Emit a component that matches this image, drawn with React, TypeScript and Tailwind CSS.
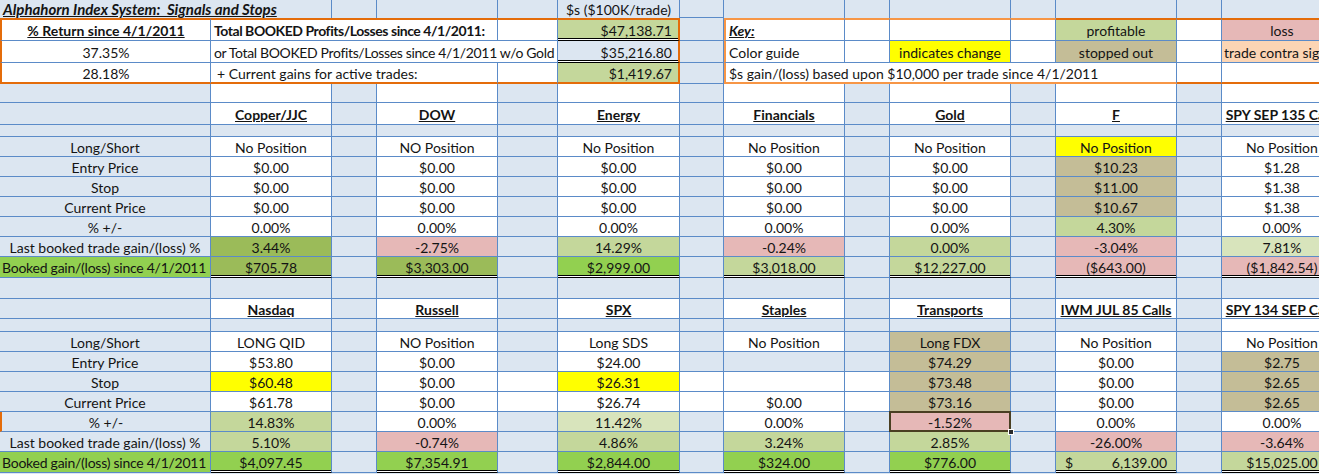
import React, { Fragment } from 'react';

type Bg = 'W' | 'B' | 'G0' | 'G1' | 'G2' | 'G3' | 'P' | 'T' | 'Y' | 'O';
type Val = [string, Bg?, ('sel' | 'acct')?];
interface Inst { name: string; v: Val[]; }

const bgs: Record<Bg, string> = {
  W: 'bg-white',
  B: 'bg-[#dce6f1]',
  G0: 'bg-[#d8e4bc]',
  G1: 'bg-[#c4d79b]',
  G2: 'bg-[#9bbb59]',
  G3: 'bg-[#92d050]',
  P: 'bg-[#e6b8b7]',
  T: 'bg-[#c4bd97]',
  Y: 'bg-[#ffff00]',
  O: 'bg-[#fcd5b4]',
};

// column widths (wide value columns and the narrow spacer columns between them)
const wideW = ['w-[121px]', 'w-[121px]', 'w-[122px]', 'w-[121px]', 'w-[121px]', 'w-[121px]', 'w-[121px]'];
const gapW = ['w-[45px]', 'w-[60px]', 'w-[44px]', 'w-[45px]', 'w-[45px]', 'w-[45px]'];

const labels = [
  'Long/Short',
  'Entry Price',
  'Stop',
  'Current Price',
  '% +/-',
  'Last booked trade gain/(loss) %',
  'Booked gain/(loss) since 4/1/2011',
];

const zero: Val[] = [['$0.00'], ['$0.00'], ['$0.00'], ['0.00%']];

const upper: Inst[] = [
  { name: 'Copper/JJC', v: [['No Position'], ...zero, ['3.44%', 'G2'], ['$705.78', 'G2']] },
  { name: 'DOW', v: [['NO Position'], ...zero, ['-2.75%', 'P'], ['$3,303.00', 'G2']] },
  { name: 'Energy', v: [['No Position'], ...zero, ['14.29%', 'G1'], ['$2,999.00', 'G3']] },
  { name: 'Financials', v: [['No Position'], ...zero, ['-0.24%', 'P'], ['$3,018.00', 'G1']] },
  { name: 'Gold', v: [['No Position'], ...zero, ['0.00%', 'G1'], ['$12,227.00', 'G1']] },
  { name: 'F', v: [['No Position', 'Y'], ['$10.23', 'T'], ['$11.00', 'T'], ['$10.67', 'T'], ['4.30%', 'G1'], ['-3.04%', 'P'], ['($643.00)', 'P']] },
  { name: 'SPY SEP 135 Calls', v: [['No Position'], ['$1.28'], ['$1.38'], ['$1.38'], ['0.00%'], ['7.81%', 'G0'], ['($1,842.54)', 'P']] },
];

const lower: Inst[] = [
  { name: 'Nasdaq', v: [['LONG QID'], ['$53.80'], ['$60.48', 'Y'], ['$61.78'], ['14.83%', 'G1'], ['5.10%', 'G1'], ['$4,097.45', 'G3']] },
  { name: 'Russell', v: [['NO Position'], ...zero, ['-0.74%', 'P'], ['$7,354.91', 'G3']] },
  { name: 'SPX', v: [['Long SDS'], ['$24.00'], ['$26.31', 'Y'], ['$26.74'], ['11.42%', 'G0'], ['4.86%', 'G1'], ['$2,844.00', 'G3']] },
  { name: 'Staples', v: [['No Position'], ['', 'B'], [''], ['$0.00'], ['0.00%'], ['3.24%', 'G1'], ['$324.00', 'G3']] },
  { name: 'Transports', v: [['Long FDX', 'T'], ['$74.29', 'T'], ['$73.48', 'T'], ['$73.16', 'T'], ['-1.52%', 'P', 'sel'], ['2.85%', 'G1'], ['$776.00', 'G3']] },
  { name: 'IWM JUL 85 Calls', v: [['No Position'], ...zero, ['-26.00%', 'P'], ['6,139.00', 'G1', 'acct']] },
  { name: 'SPY 134 SEP Calls', v: [['No Position'], ['$2.75', 'T'], ['$2.65', 'T'], ['$2.65', 'T'], ['0.00%'], ['-3.64%', 'P'], ['$15,025.00', 'G1']] },
];

const DOUBLE = 'border-b-black shadow-[inset_0_-1px_0_#ffffff,inset_0_-2px_0_#000000]';
const OB = 'border-b-2 border-b-[#e46c0a]';

interface CellProps {
  w: string;
  bg?: string;
  bb?: string;
  br?: string;
  justify?: string;
  className?: string;
  children?: React.ReactNode;
}

const Cell = ({
  w,
  bg = 'bg-[#dce6f1]',
  bb = 'border-b',
  br = 'border-r',
  justify = 'justify-center',
  className = '',
  children,
}: CellProps) => (
  <div className={`${w} ${bg} ${bb} ${br} ${justify} border-[#5b8bc8] shrink-0 flex items-center pt-[1px] whitespace-nowrap ${className}`}>
    {children}
  </div>
);

const Block = ({ items, second }: { items: Inst[]; second?: boolean }) => (
  <>
    <div className={`flex ${second ? 'h-[20px]' : 'h-[22px]'}`}>
      <Cell w="w-[211px]" />
      {items.map((it, i) => (
        <Fragment key={it.name}>
          <Cell w={wideW[i]} bg="bg-white" className="font-bold underline">{it.name}</Cell>
          {i < 6 && <Cell w={gapW[i]} />}
        </Fragment>
      ))}
    </div>
    <div className={`flex ${second ? 'h-[13px]' : 'h-[12px]'}`}>
      <Cell w="w-[211px]" />
      {items.map((it, i) => (
        <Fragment key={it.name}>
          <Cell w={wideW[i]} bg={second && i === 6 ? 'bg-white' : 'bg-[#dce6f1]'} />
          {i < 6 && <Cell w={gapW[i]} />}
        </Fragment>
      ))}
    </div>
    {labels.map((label, r) => {
      const last = r === 6;
      const whiteGap = second && (r === 2 || r === 3);
      return (
        <div key={label} className={`flex ${last ? 'h-[21px]' : 'h-[20px]'}`}>
          <Cell
            w="w-[211px]"
            bg={last ? 'bg-[#92d050]' : 'bg-[#dce6f1]'}
            justify={last ? 'justify-start pl-[2px]' : 'justify-center'}
            className={`${second && r === 4 ? 'border-l-2 border-l-[#e46c0a]' : ''} ${last ? 'tracking-[-0.25px]' : ''}`}
          >
            {label}
          </Cell>
          {items.map((it, i) => {
            const [text, bg = 'W', kind] = it.v[r];
            return (
              <Fragment key={it.name}>
                <Cell
                  w={wideW[i]}
                  bg={bgs[bg]}
                  justify={kind === 'acct' ? 'justify-between px-[9px]' : 'justify-center'}
                  className={`${last ? DOUBLE : ''} ${kind ? 'relative' : ''}`}
                >
                  {kind === 'acct' && <span>$</span>}
                  {text}
                  {kind === 'sel' && (
                    <>
                      <div className="absolute -inset-[1px] z-10 border-2 border-[#4a3f22]" />
                      <div className="absolute -right-[4px] -bottom-[4px] z-20 w-[6px] h-[6px] bg-[#2b2b2b] border border-white" />
                    </>
                  )}
                </Cell>
                {i < 6 && <Cell w={gapW[i]} bg={whiteGap && i >= 1 && i <= 3 ? 'bg-white' : 'bg-[#dce6f1]'} />}
              </Fragment>
            );
          })}
        </div>
      );
    })}
  </>
);

const BlankRow = ({ h, wideWhite }: { h: string; wideWhite?: boolean }) => (
  <div className={`flex ${h}`}>
    <Cell w="w-[211px]" />
    {wideW.map((w, i) => (
      <Fragment key={i}>
        <Cell w={w} bg={wideWhite ? 'bg-white' : 'bg-[#dce6f1]'} />
        {i < 6 && <Cell w={gapW[i]} />}
      </Fragment>
    ))}
  </div>
);

export default function App() {
  const top2 = 'border-t-2 border-t-[#e46c0a]';
  const keyTop = 'border-t-2 border-t-[#f79646]';
  return (
    <div className="w-[1319px] h-[474px] overflow-hidden bg-[#dce6f1] font-['Lato',sans-serif] text-[14px] text-[#141414]">
      <div className="w-[1343px]">
        {/* title row */}
        <div className="flex h-[18px]">
          <Cell w="w-[332px]" bb="" justify="justify-start pl-[3px]" className="text-[15px] font-bold italic underline whitespace-pre">
            Alphahorn Index System:  Signals and Stops
          </Cell>
          <Cell w="w-[45px]" bb="" />
          <Cell w="w-[121px]" bb="" />
          <Cell w="w-[60px]" bb="" />
          <Cell w="w-[122px]" bb="">$s ($100K/trade)</Cell>
          <Cell w="w-[44px]" />
          <Cell w="w-[121px]" bb="" />
          <Cell w="w-[45px]" bb="" />
          <Cell w="w-[121px]" bb="" />
          <Cell w="w-[45px]" bb="" />
          <Cell w="w-[121px]" bb="" />
          <Cell w="w-[45px]" bb="" />
          <Cell w="w-[121px]" bb="" />
        </div>

        {/* summary box + key */}
        <div className="flex h-[23px]">
          <Cell w="w-[211px]" bg="bg-white" className={`${top2} border-l-2 border-l-[#e46c0a] font-bold underline`}>
            % Return since 4/1/2011
          </Cell>
          <Cell w="w-[287px]" bg="bg-white" justify="justify-start pl-[3px]" className={`${top2} font-bold tracking-[-0.45px]`}>
            Total BOOKED Profits/Losses since 4/1/2011:
          </Cell>
          <Cell w="w-[60px]" bg="bg-white" className={top2} />
          <Cell w="w-[122px]" bg="bg-[#c4d79b]" br="border-r-2 border-r-[#e46c0a]" justify="justify-end pr-[6px]" className={`${top2} ${DOUBLE}`}>
            $47,138.71
          </Cell>
          <Cell w="w-[44px]" />
          <Cell w="w-[121px]" bg="bg-white" justify="justify-start pl-[3px]" className={`${keyTop} border-l-2 border-l-[#f79646] font-bold italic underline`}>
            Key:
          </Cell>
          <Cell w="w-[45px]" bg="bg-white" className={keyTop} />
          <Cell w="w-[121px]" bg="bg-white" className={keyTop} />
          <Cell w="w-[45px]" bg="bg-white" className={keyTop} />
          <Cell w="w-[121px]" bg="bg-[#c4d79b]" className={top2}>profitable</Cell>
          <Cell w="w-[45px]" bg="bg-white" className={top2} />
          <Cell w="w-[121px]" bg="bg-[#e6b8b7]" className={top2}>loss</Cell>
        </div>
        <div className="flex h-[22px]">
          <Cell w="w-[211px]" bg="bg-white" className="border-l-2 border-l-[#e46c0a]">37.35%</Cell>
          <Cell w="w-[347px]" bg="bg-white" justify="justify-start pl-[3px]" className="tracking-[-0.35px]">
            or Total BOOKED Profits/Losses since 4/1/2011 w/o Gold
          </Cell>
          <Cell w="w-[122px]" br="border-r-2 border-r-[#e46c0a]" justify="justify-end pr-[6px]" className={DOUBLE}>
            $35,216.80
          </Cell>
          <Cell w="w-[44px]" />
          <Cell w="w-[121px]" bg="bg-white" justify="justify-start pl-[3px]" className="border-l-2 border-l-[#f79646]">
            Color guide
          </Cell>
          <Cell w="w-[45px]" bg="bg-white" />
          <Cell w="w-[121px]" bg="bg-[#ffff00]">indicates change</Cell>
          <Cell w="w-[45px]" bg="bg-white" />
          <Cell w="w-[121px]" bg="bg-[#c4bd97]">stopped out</Cell>
          <Cell w="w-[45px]" bg="bg-white" />
          <Cell w="w-[121px]" bg="bg-[#fcd5b4]" justify="justify-start pl-[2px]" className="overflow-hidden">
            trade contra signal
          </Cell>
        </div>
        <div className="flex h-[21px]">
          <Cell w="w-[211px]" bg="bg-white" bb={OB} className="border-l-2 border-l-[#e46c0a]">
            28.18%
          </Cell>
          <Cell w="w-[287px]" bg="bg-white" bb={OB} justify="justify-start pl-[6px]">
            + Current gains for active trades:
          </Cell>
          <Cell w="w-[60px]" bg="bg-white" bb={OB} />
          <Cell w="w-[122px]" bg="bg-[#c4d79b]" bb={OB} br="border-r-2 border-r-[#e46c0a]" justify="justify-end pr-[6px]">
            $1,419.67
          </Cell>
          <Cell w="w-[44px]" />
          <Cell w="w-[453px]" bg="bg-white" bb="border-b-2 border-b-[#f79646]" justify="justify-start pl-[3px]" className="border-l-2 border-l-[#f79646]">
            $s gain/(loss) based upon $10,000 per trade since 4/1/2011
          </Cell>
          <Cell w="w-[45px]" bg="bg-white" bb={OB} />
          <Cell w="w-[121px]" bg="bg-white" bb={OB} />
        </div>

        <BlankRow h="h-[19px]" wideWhite />
        <Block items={upper} />
        <BlankRow h="h-[21px]" />
        <Block items={lower} second />
      </div>
    </div>
  );
}
